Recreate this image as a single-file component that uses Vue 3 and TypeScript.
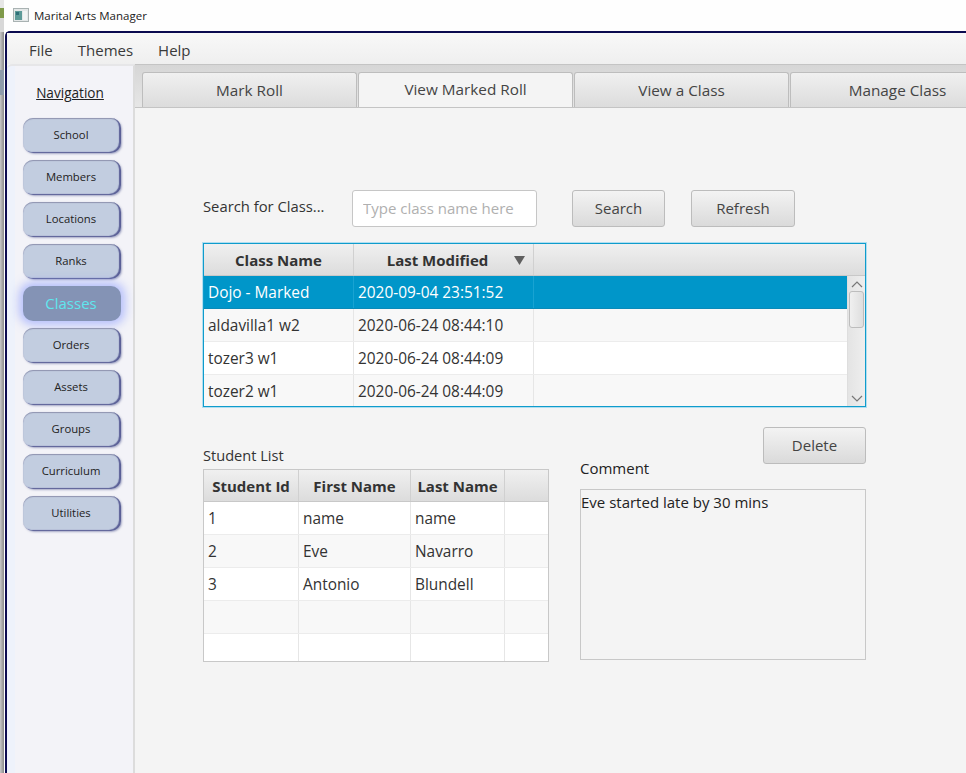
<template>
  <div class="app">
    <div class="titlebar">
      <div class="edge"></div>
      <svg class="app-icon" width="16" height="14" viewBox="0 0 16 14">
        <rect x="0.5" y="0.5" width="15" height="13" fill="#e4e8e8" stroke="#a9b2b2" />
        <rect x="2" y="3" width="7" height="9" fill="#5d9a98" />
        <rect x="3" y="4" width="3" height="3" fill="#2f6f78" />
        <rect x="10" y="3" width="4" height="9" fill="#f2f4f4" />
      </svg>
      <span class="title">Marital Arts Manager</span>
    </div>

    <div class="window">
      <div class="menubar">
        <span v-for="item in menus" :key="item">{{ item }}</span>
      </div>

      <div class="body">
        <nav class="sidebar">
          <div class="nav-title">Navigation</div>
          <button
            v-for="item in navItems"
            :key="item"
            class="nav-btn"
            :class="{ active: item === 'Classes' }"
          >
            {{ item }}
          </button>
        </nav>

        <main class="main">
          <div class="tabs">
            <div
              v-for="tab in tabs"
              :key="tab"
              class="tab"
              :class="{ selected: tab === 'View Marked Roll' }"
            >
              {{ tab }}
            </div>
          </div>

          <div class="content">
            <div class="search-row">
              <label class="search-label">Search for Class...</label>
              <input class="search-input" type="text" placeholder="Type class name here" />
              <button class="btn search-btn">Search</button>
              <button class="btn refresh-btn">Refresh</button>
            </div>

            <div class="table classes">
              <div class="thead">
                <div class="th c-name">Class Name</div>
                <div class="th c-mod">
                  Last Modified
                  <svg class="sort" width="11" height="9" viewBox="0 0 11 9">
                    <path d="M0 0h11L5.5 9z" fill="#5f5f5f" />
                  </svg>
                </div>
                <div class="th c-fill"></div>
              </div>
              <div class="tbody-wrap">
                <div class="tbody">
                  <div
                    v-for="(row, i) in classRows"
                    :key="i"
                    class="tr"
                    :class="{ odd: i % 2 === 1, sel: i === 0 }"
                  >
                    <div class="td c-name">{{ row.name }}</div>
                    <div class="td c-mod">{{ row.modified }}</div>
                    <div class="td c-fill"></div>
                  </div>
                </div>
                <div class="scrollbar">
                  <svg width="14" height="9" viewBox="0 0 14 9">
                    <path d="M2 7l5-5 5 5" fill="none" stroke="#777" stroke-width="1.2" />
                  </svg>
                  <div class="track"><div class="thumb"></div></div>
                  <svg width="14" height="9" viewBox="0 0 14 9">
                    <path d="M2 2l5 5 5-5" fill="none" stroke="#777" stroke-width="1.2" />
                  </svg>
                </div>
              </div>
            </div>

            <div class="lower">
              <div class="students">
                <div class="students-label">Student List</div>
                <div class="table student-table">
                  <div class="thead">
                    <div class="th s-id">Student Id</div>
                    <div class="th s-first">First Name</div>
                    <div class="th s-last">Last Name</div>
                    <div class="th s-fill"></div>
                  </div>
                  <div
                    v-for="(row, i) in studentRows"
                    :key="i"
                    class="tr"
                    :class="{ odd: i % 2 === 1 }"
                  >
                    <div class="td s-id">{{ row.id }}</div>
                    <div class="td s-first">{{ row.first }}</div>
                    <div class="td s-last">{{ row.last }}</div>
                    <div class="td s-fill"></div>
                  </div>
                </div>
              </div>

              <div class="comment-col">
                <button class="btn delete-btn">Delete</button>
                <div class="comment-label">Comment</div>
                <div class="comment-box">Eve started late by 30 mins</div>
              </div>
            </div>
          </div>
        </main>
      </div>
    </div>
  </div>
</template>

<script setup lang="ts">
const menus = ['File', 'Themes', 'Help'];

const navItems = [
  'School',
  'Members',
  'Locations',
  'Ranks',
  'Classes',
  'Orders',
  'Assets',
  'Groups',
  'Curriculum',
  'Utilities',
];

const tabs = ['Mark Roll', 'View Marked Roll', 'View a Class', 'Manage Class'];

const classRows = [
  { name: 'Dojo - Marked', modified: '2020-09-04 23:51:52' },
  { name: 'aldavilla1 w2', modified: '2020-06-24 08:44:10' },
  { name: 'tozer3 w1', modified: '2020-06-24 08:44:09' },
  { name: 'tozer2 w1', modified: '2020-06-24 08:44:09' },
];

const studentRows = [
  { id: '1', first: 'name', last: 'name' },
  { id: '2', first: 'Eve', last: 'Navarro' },
  { id: '3', first: 'Antonio', last: 'Blundell' },
  { id: '', first: '', last: '' },
  { id: '', first: '', last: '' },
];
</script>

<style>
html,
body {
  margin: 0;
  overflow: hidden;
  background: #fff;
}
</style>

<style scoped>
.app {
  width: 966px;
  height: 773px;
  overflow: hidden;
  font-family: "Open Sans", "Noto Sans", sans-serif;
  color: #333;
  background: #fff;
  box-sizing: border-box;
}

.titlebar {
  position: relative;
  height: 31px;
  display: flex;
  align-items: center;
  padding-left: 13px;
  box-sizing: border-box;
  background: #fefefe;
}

/* bit of the window behind, showing down the left side */
.edge {
  position: absolute;
  left: 0;
  top: 0;
  width: 4px;
  height: 773px;
  background:
    linear-gradient(#e6e6e6 0 8px, #7f9a4a 8px 18px, #d8d8d8 18px 32px, transparent 32px 70px, #8d9bab 70px 95px, transparent 95px),
    linear-gradient(90deg, #c8c8c8, #8a8a8a);
}

.app-icon {
  margin-top: -2px;
}

.title {
  margin-left: 5px;
  margin-top: -1px;
  font-size: 11.5px;
  color: #222;
}

.window {
  height: 742px;
  margin-left: 5px;
  border-top: 2px solid #0b0b50;
  border-left: 2px solid #0b0b50;
  border-top-left-radius: 5px;
  box-sizing: border-box;
  background: #f4f4f4;
  display: flex;
  flex-direction: column;
}

.menubar {
  height: 31px;
  flex: none;
  display: flex;
  align-items: center;
  gap: 25px;
  padding: 2px 0 0 22px;
  box-sizing: border-box;
  font-size: 15px;
  color: #3a3a3a;
  background: linear-gradient(#f8f8f8, #efefef);
}

.body {
  flex: 1;
  display: flex;
  min-height: 0;
}

.sidebar {
  width: 128px;
  flex: none;
  box-sizing: border-box;
  padding: 0 0 0 16px;
  display: flex;
  flex-direction: column;
  align-items: flex-start;
  background: linear-gradient(90deg, #eef2fb 8px, #f3f3f8 8px);
  border-top: 2px solid #e6e6e8;
  border-right: 2px solid #dcdcdc;
  border-top-left-radius: 5px;
}

.nav-title {
  width: 96px;
  margin-top: 17px;
  margin-bottom: 16px;
  line-height: 19px;
  text-align: center;
  font-size: 13.6px;
  color: #222;
  text-decoration: underline;
  transform: translateX(-1px);
}

.nav-btn {
  width: 98px;
  height: 35px;
  margin: 0 0 7px;
  padding: 0 2px 2px 0;
  border: none;
  border-radius: 10px;
  font-family: inherit;
  font-size: 11.3px;
  color: #222;
  background: #c2cde0;
  box-shadow: inset -2px -1px 1px #5a5f96, inset 0 1px 1px #8f94b0, 1px 1px 2px rgba(90, 95, 150, 0.5);
}

.nav-btn.active {
  font-size: 15px;
  color: #5fe6ee;
  background: #8493b5;
  box-shadow: 0 0 10px 4px rgba(120, 140, 255, 0.5);
}

.main {
  flex: 1;
  min-width: 0;
  display: flex;
  flex-direction: column;
}

.tabs {
  height: 44px;
  flex: none;
  display: flex;
  align-items: flex-end;
  gap: 1px;
  padding-left: 7px;
  box-sizing: border-box;
  background: linear-gradient(#d6d6d6, #e6e6e6);
  border-top: 1px solid #c4c4c4;
  border-bottom: 1px solid #c4c4c4;
  overflow: hidden;
}

.tab {
  width: 215px;
  flex: none;
  height: 35px;
  display: flex;
  align-items: center;
  justify-content: center;
  box-sizing: border-box;
  font-size: 15.3px;
  color: #444;
  background: linear-gradient(#f0f0f0, #dcdcdc);
  border: 1px solid #bdbdbd;
  border-bottom: none;
  border-radius: 3px 3px 0 0;
}

.tab.selected {
  height: 36px;
  margin-bottom: -1px;
  padding-bottom: 3px;
  background: #f4f4f4;
}

.content {
  padding: 82px 0 0 68px;
  width: 663px;
  box-sizing: content-box;
}

.search-row {
  display: flex;
  align-items: center;
  height: 37px;
}

.search-label {
  width: 149px;
  flex: none;
  font-size: 14.8px;
  color: #333;
  margin-top: -5px;
}

.search-input {
  width: 185px;
  height: 37px;
  flex: none;
  box-sizing: border-box;
  padding: 0 10px 2px;
  border: 1px solid #c6c6c6;
  border-radius: 3px;
  background: #fff;
  font-family: inherit;
  font-size: 15px;
  outline: none;
}

.search-input::placeholder {
  color: #b0b0b0;
}

.btn {
  height: 37px;
  padding: 0 0 2px;
  border: 1px solid #bcbcbc;
  border-radius: 3px;
  font-family: inherit;
  font-size: 15px;
  color: #444;
  background: linear-gradient(#f3f3f3, #dadada);
}

.search-btn {
  width: 93px;
  margin-left: 35px;
}

.refresh-btn {
  width: 104px;
  margin-left: 26px;
}

.table {
  box-sizing: border-box;
  background: #fff;
  font-size: 15.4px;
}

.classes {
  width: 663px;
  height: 164px;
  margin-top: 16px;
  border: 1px solid #0f9ccc;
  box-shadow: 0 0 0 1px rgba(110, 200, 235, 0.5);
}

.thead {
  height: 31px;
  display: flex;
  background: linear-gradient(#f0f0f0, #dcdcdc);
  border-bottom: 1px solid #c8c8c8;
  box-sizing: content-box;
}

.th {
  position: relative;
  display: flex;
  align-items: center;
  justify-content: center;
  box-sizing: border-box;
  font-weight: 700;
  font-size: 15px;
  color: #333;
  border-right: 1px solid #d0d0d0;
}

.tr {
  height: 33px;
  display: flex;
  box-sizing: border-box;
  background: #fff;
  border-bottom: 1px solid #ececec;
}

.tr.odd {
  background: #f8f8f8;
}

.td {
  display: flex;
  align-items: center;
  box-sizing: border-box;
  padding-left: 4px;
  color: #333;
  border-right: 1px solid #e6e6e6;
}

.tr.sel {
  background: #0096c9;
  border-bottom-color: #0a8ab8;
}

.tr.sel .td {
  color: #fff;
  border-right-color: #19a3d2;
}

.c-name {
  width: 150px;
  flex: none;
}

.c-mod {
  width: 180px;
  flex: none;
}

.th.c-mod {
  padding-right: 12px;
}

.c-fill {
  flex: 1;
  border-right: none;
}

.sort {
  position: absolute;
  right: 8px;
  top: 12px;
}

.tbody-wrap {
  display: flex;
  height: 130px;
  overflow: hidden;
}

.tbody {
  flex: 1;
  min-width: 0;
  background: #f8f8f8;
  overflow: hidden;
}

.scrollbar {
  width: 18px;
  flex: none;
  box-sizing: border-box;
  display: flex;
  flex-direction: column;
  align-items: center;
  padding-top: 4px;
  background: linear-gradient(90deg, #e4e4e4, #eeeeee);
  border-left: 1px solid #dedede;
}

.track {
  flex: 1;
  width: 100%;
  padding: 2px 1px 0;
  box-sizing: border-box;
}

.thumb {
  height: 35px;
  border: 1px solid #bdbdbd;
  border-radius: 3px;
  background: linear-gradient(90deg, #f0f0f0, #dedede);
}

.scrollbar svg:last-child {
  margin-bottom: 3px;
}

.lower {
  display: flex;
  width: 663px;
  gap: 31px;
}

.students {
  width: 346px;
  flex: none;
  padding-top: 39px;
}

.students-label {
  font-size: 14.6px;
  line-height: 19px;
  margin-bottom: 4px;
  color: #333;
}

.student-table {
  width: 346px;
  height: 193px;
  border: 1px solid #c8c8c8;
  overflow: hidden;
}

.s-id {
  width: 95px;
  flex: none;
}

.s-first {
  width: 112px;
  flex: none;
}

.s-last {
  width: 94px;
  flex: none;
}

.s-fill {
  flex: 1;
  border-right: none;
}

.comment-col {
  width: 286px;
  flex: none;
  padding-top: 20px;
}

.delete-btn {
  display: block;
  width: 103px;
  margin-left: auto;
}

.comment-label {
  margin-top: -6px;
  font-size: 15px;
  line-height: 20px;
  color: #222;
}

.comment-box {
  height: 171px;
  margin-top: 11px;
  box-sizing: border-box;
  padding: 2px 0;
  border: 1px solid #c8c8c8;
  background: #f4f4f4;
  font-size: 15px;
  color: #222;
}
</style>
